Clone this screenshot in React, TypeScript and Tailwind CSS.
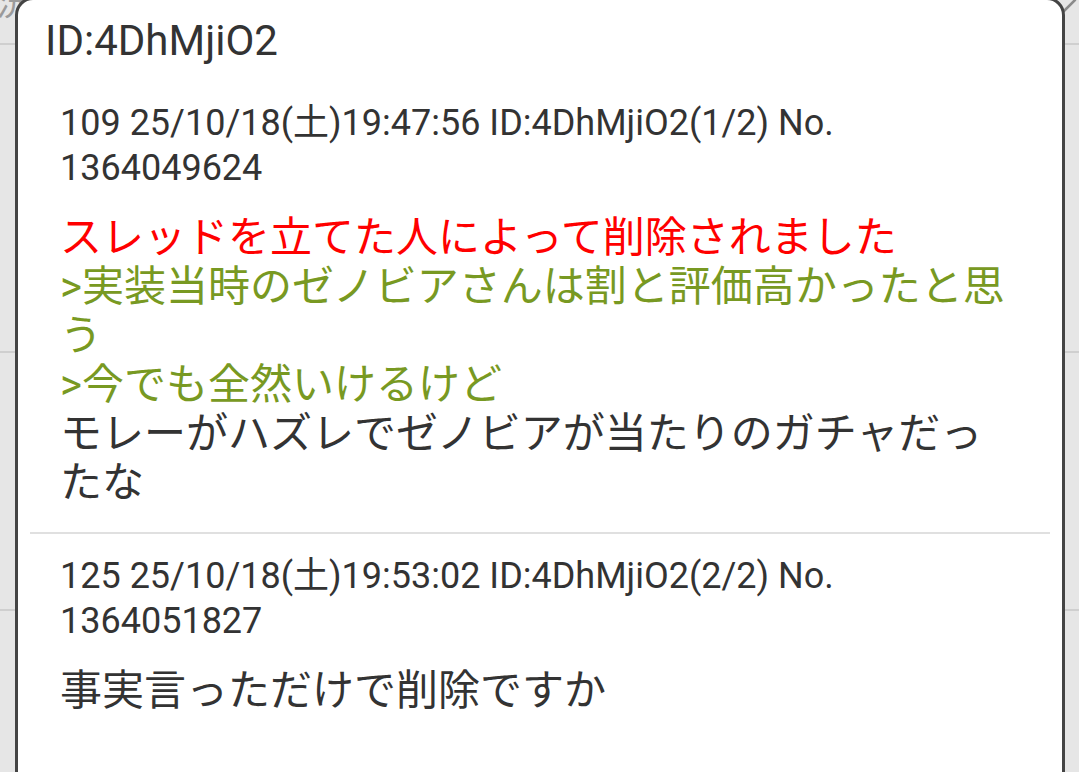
const posts = [
  {
    meta: "109 25/10/18(土)19:47:56 ID:4DhMjiO2(1/2) No. 1364049624",
    lines: [
      { text: "スレッドを立てた人によって削除されました", tone: "deleted" },
      { text: ">実装当時のゼノビアさんは割と評価高かったと思う", tone: "quote" },
      { text: ">今でも全然いけるけど", tone: "quote" },
      { text: "モレーがハズレでゼノビアが当たりのガチャだったな", tone: "plain" },
    ],
  },
  {
    meta: "125 25/10/18(土)19:53:02 ID:4DhMjiO2(2/2) No. 1364051827",
    lines: [{ text: "事実言っただけで削除ですか", tone: "plain" }],
  },
];

const toneClass: Record<string, string> = {
  deleted: "text-[#ff0000]",
  quote: "text-[#789922]",
  plain: "text-[#333333]",
};

const Post = ({ post, first }: { post: (typeof posts)[number]; first: boolean }) => {
  return (
    <div className={`px-[30px] pt-[20px] pb-[25px] ${first ? "" : "border-t-2 border-[#e0e0e0]"}`}>
      <p className="text-[36px] leading-[45px] text-[#333333]">{post.meta}</p>
      <div className="mt-[22px] text-[42px] leading-[49px]">
        {post.lines.map((l, i) => (
          <p key={i} className={toneClass[l.tone]}>
            {l.text}
          </p>
        ))}
      </div>
    </div>
  );
};

export default function App() {
  return (
    <div
      className="relative h-[772px] w-full overflow-hidden bg-[#e6e6e6]"
      style={{ fontFamily: 'Roboto, "Noto Sans CJK JP", sans-serif' }}
    >
      {/* list behind the popup */}
      <div className="flex flex-col">
        <div className="flex h-[45px] justify-between overflow-hidden border-b-2 border-[#cfcfcf]">
          <span className="-mt-[22px] -ml-[4px] text-[34px] leading-[50px] text-[#9a9a9a]">況</span>
          <svg width="20" height="20" viewBox="0 0 20 20" className="-mt-[2px]">
            <path d="M2 16 L16 2" stroke="#8a8a8a" strokeWidth="2.5" fill="none" strokeLinecap="round" />
          </svg>
        </div>
        <div className="h-[308px] border-b-2 border-[#cfcfcf]" />
        <div className="h-[258px] border-b-2 border-[#cfcfcf]" />
        <div className="h-[200px]" />
      </div>

      {/* id popup */}
      <div className="absolute top-[-3px] left-[15px] h-[800px] w-[1050px] rounded-[18px] border-[3px] border-[#444444] bg-white">
        <p className="px-[27px] pt-[13px] pb-[12px] text-[42px] leading-[56px] text-[#333333]">ID:4DhMjiO2</p>
        <div className="mx-[12px]">
          {posts.map((p, i) => (
            <Post key={i} post={p} first={i === 0} />
          ))}
        </div>
      </div>
    </div>
  );
}
